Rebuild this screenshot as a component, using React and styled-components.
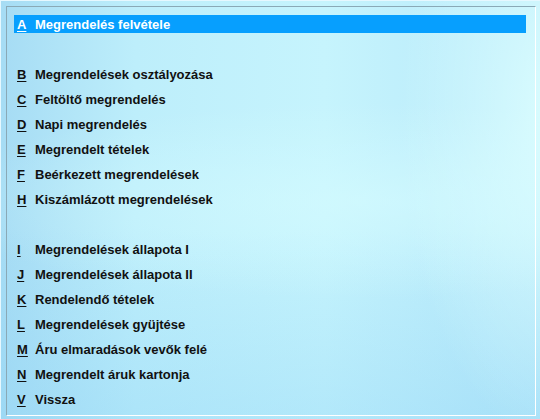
import React from 'react';
import styled, { createGlobalStyle } from 'styled-components';

const GlobalStyle = createGlobalStyle`
  html, body {
    margin: 0;
    padding: 0;
  }
  body {
    font-family: "Liberation Sans", Arial, sans-serif;
  }
`;

const items = [
  { key: 'A', label: 'Megrendelés felvétele', selected: true },
  { spacer: true },
  { key: 'B', label: 'Megrendelések osztályozása' },
  { key: 'C', label: 'Feltöltő megrendelés' },
  { key: 'D', label: 'Napi megrendelés' },
  { key: 'E', label: 'Megrendelt tételek' },
  { key: 'F', label: 'Beérkezett megrendelések' },
  { key: 'H', label: 'Kiszámlázott megrendelések' },
  { spacer: true },
  { key: 'I', label: 'Megrendelések állapota I' },
  { key: 'J', label: 'Megrendelések állapota II' },
  { key: 'K', label: 'Rendelendő tételek' },
  { key: 'L', label: 'Megrendelések gyüjtése' },
  { key: 'M', label: 'Áru elmaradások vevők felé' },
  { key: 'N', label: 'Megrendelt áruk kartonja' },
  { key: 'V', label: 'Vissza' }
];

const App = () => {
  return (
    <Frame>
      <GlobalStyle />
      <Panel>
        <Menu>
          {items.map((item, i) =>
            item.spacer ? (
              <Spacer key={'s' + i} />
            ) : (
              <Item key={item.key} selected={item.selected}>
                <Hotkey>{item.key}</Hotkey>
                <Label>{item.label}</Label>
              </Item>
            )
          )}
        </Menu>
      </Panel>
    </Frame>
  );
};

const Frame = styled.div`
  width: 540px;
  height: 419px;
  box-sizing: border-box;
  padding: 5px 4px 3px 5px;
  border-top: 1px solid #e6f8ff;
  border-left: 1px solid #e6f8ff;
  background:
    radial-gradient(ellipse 230px 480px at 560px 110px, rgba(222, 255, 255, 0.95), rgba(222, 255, 255, 0) 70%),
    radial-gradient(ellipse 620px 140px at 360px 200px, rgba(214, 252, 255, 0.6), rgba(214, 252, 255, 0) 70%),
    linear-gradient(180deg, rgba(255, 255, 255, 0) 55%, rgba(140, 210, 245, 0.35) 100%),
    linear-gradient(90deg, #a6dcf4 0%, #bdeefb 25%, #c6f4fd 60%, #b6e8fa 100%);
  background-color: #bcecfb;
`;

const Panel = styled.div`
  height: 100%;
  box-sizing: border-box;
  border-top: 1px solid #8aa9b6;
  border-left: 1px solid #8aa9b6;
  border-right: 1px solid #ffffff;
  border-bottom: 1px solid #ffffff;
`;

const Menu = styled.div`
  display: flex;
  flex-direction: column;
  gap: 7px;
  padding: 8px 9px 0 7px;
`;

const Spacer = styled.div`
  height: 18px;
`;

const Item = styled.div`
  display: flex;
  align-items: center;
  height: 18px;
  padding-left: 3px;
  font-size: 13px;
  font-weight: bold;
  color: ${props => (props.selected ? '#ffffff' : '#111111')};
  background: ${props => (props.selected ? '#079ffe' : 'transparent')};
`;

const Hotkey = styled.span`
  width: 18px;
  flex-shrink: 0;
  text-decoration: underline;
  text-underline-offset: 2px;
`;

const Label = styled.span`
  white-space: nowrap;
`;

export default App;
